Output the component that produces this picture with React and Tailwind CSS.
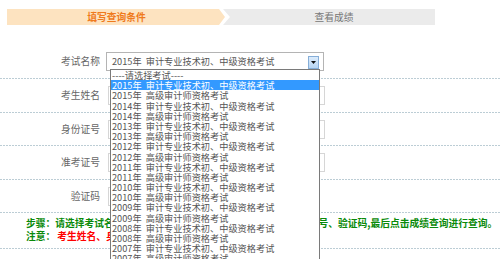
import React from 'react';

const exams = [];
for (let y = 2015; y >= 2007; y--) {
  exams.push(`${y}年\u00a0\u00a0审计专业技术初、中级资格考试`);
  exams.push(`${y}年\u00a0\u00a0高级审计师资格考试`);
}

function Dots() {
  return <div className="h-px w-full bg-[linear-gradient(to_right,#bccdd5_2px,transparent_2px)] bg-[length:3px_1px] bg-repeat-x" />;
}

function Row({ label, h, children }) {
  return (
    <>
      <div className={`flex items-center ${h}`}>
        <div className="w-[100px] text-right text-[9.75px] text-[#666]">{label}</div>
        {children}
      </div>
      <Dots />
    </>
  );
}

function Input({ w = 'w-[217px]' }) {
  return <div className={`ml-[8px] h-[19px] border border-[#d6d6d6] bg-white ${w}`} />;
}

export default function App() {
  return (
    <div className="relative h-[259px] w-[500px] overflow-hidden bg-white font-['Noto_Sans_CJK_SC',sans-serif]">
      {/* steps */}
      <div className="ml-[7px] mt-[9px] flex h-[16px] w-[428px]">
        <div className="flex w-[212px] items-center justify-center bg-[#fde3c0] pl-[7px] text-[9.75px] font-bold text-[#ef7a1c]">
          填写查询条件
        </div>
        <svg width="14" height="16" viewBox="0 0 14 16" className="shrink-0">
          <polygon points="0,0 6,8 0,16" fill="#fde3c0" />
          <polygon points="4,0 14,0 14,16 4,16 11,8" fill="#ebebeb" />
        </svg>
        <div className="flex flex-1 items-center justify-center bg-[#ebebeb] text-[9.75px] text-[#777]">
          查看成绩
        </div>
      </div>

      {/* form */}
      <div className="mt-[20px]">
        <Row label="考试名称" h="h-[33px]">
          <div className="ml-[6px] flex h-[19px] w-[218px] items-center border border-[#b4b4b4] bg-white">
            <span className="ml-[5px] flex-1 whitespace-nowrap text-[9.2px] text-[#555]">
              2015年{'\u00a0\u00a0'}审计专业技术初、中级资格考试
            </span>
            <div className="mr-[4px] mt-[2px] flex h-[13px] w-[11px] items-center justify-center border border-[#86aed8] bg-[linear-gradient(#dcecfc,#b8d6f4)]">
              <svg width="5" height="3" viewBox="0 0 5 3">
                <polygon points="0,0 5,0 2.5,3" fill="#111" />
              </svg>
            </div>
          </div>
        </Row>
        <Row label="考生姓名" h="h-[33px]"><Input /></Row>
        <Row label="身份证号" h="h-[32px]"><Input /></Row>
        <Row label="准考证号" h="h-[33px]"><Input /></Row>
        <Row label="验证码" h="h-[32px]"><Input w="w-[90px]" /></Row>

        <div className="h-[35px] pl-[26px] pt-[4px] text-[9.75px] font-bold leading-[13px]">
          <div className="whitespace-nowrap text-[#0a8a0a]">
            步骤：请选择考试名称，然后依次输入考生姓名、身份证号、准考证号、验证码,最后点击成绩查询进行查询。
          </div>
          <div className="whitespace-nowrap">
            <span className="text-[#0a8a0a]">注意：</span>
            <span className="ml-[2px] text-[#f00]">考生姓名、身份证号、准考证号必须填写正确。</span>
          </div>
        </div>
        <Dots />
      </div>

      {/* open select list */}
      <div className="absolute left-[110px] top-[69px] w-[210px] border border-[#7a7a7a] bg-white text-[9.2px] leading-[10.2px] text-[#555]">
        <div className="h-[10.2px] whitespace-nowrap pl-[1px]">----请选择考试----</div>
        {exams.map((e, i) => (
          <div
            key={i}
            className={`h-[10.2px] whitespace-nowrap pl-[1px] ${i === 0 ? 'bg-[#3399ff] text-white' : ''}`}
          >
            {e}
          </div>
        ))}
      </div>
    </div>
  );
}
